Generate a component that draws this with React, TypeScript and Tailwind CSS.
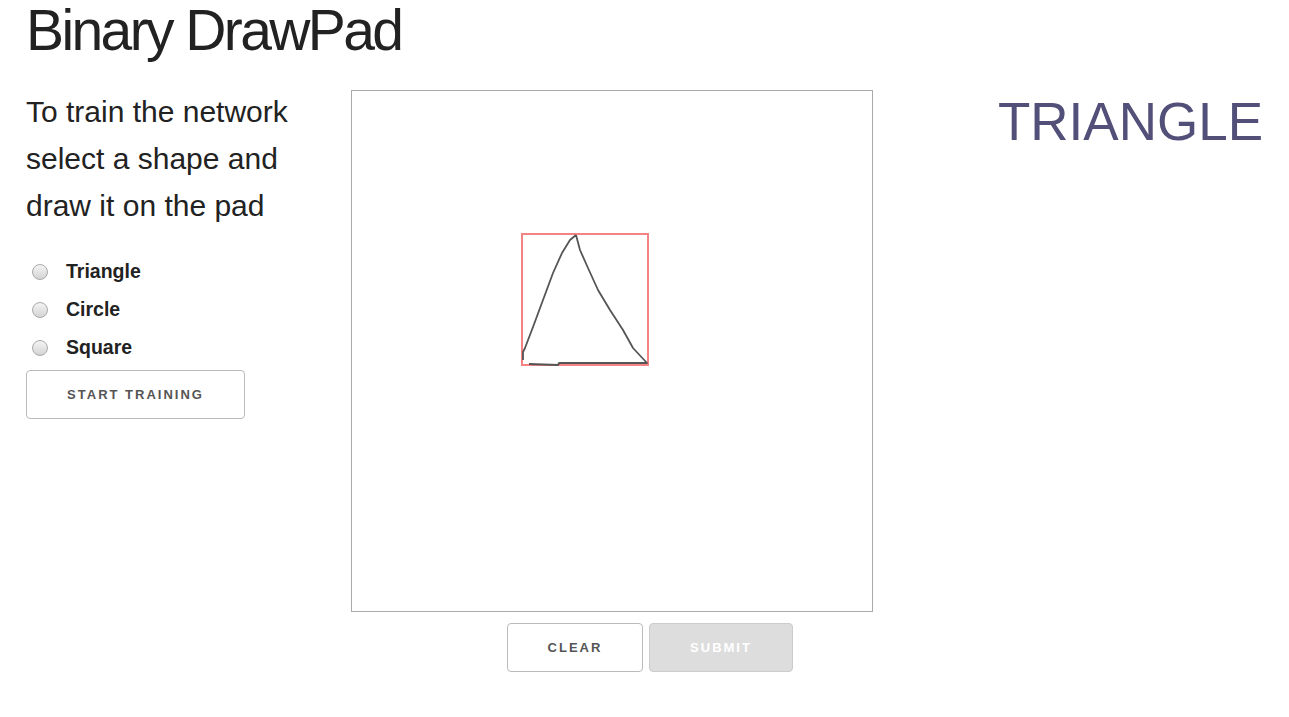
const shapes = ['Triangle', 'Circle', 'Square']

const btn =
	'h-[49px] rounded-[4px] border border-[#bbb] text-[13px] font-bold uppercase tracking-[2px] font-["Liberation_Sans",sans-serif]'

const DrawPad = () => (
	<div className="h-[522px] w-[522px] shrink-0 border border-[#aaa] bg-white">
		<svg
			className="block"
			height="520"
			viewBox="352 91 520 520"
			width="520"
		>
			<rect
				fill="none"
				height="131"
				opacity="0.9"
				stroke="#f47575"
				strokeWidth="2"
				width="126"
				x="522"
				y="234"
			/>
			<path
				d="M576 235 L570 240 L562 253 L553 273 L543 300 L533 327 L525 348 L523 352 L523 360 M529 364 L558 365 L559 363 L647 363 L633 348 L623 330 L610 310 L598 290 L588 268 L580 250 L576 235"
				fill="none"
				stroke="#555"
				strokeLinejoin="round"
				strokeWidth="1.8"
			/>
		</svg>
	</div>
)

export default function App() {
	return (
		<div className="min-h-screen bg-white px-[26px] pt-[2px] font-['Liberation_Sans',sans-serif] text-[#222]">
			<h1 className="-mt-[5px] text-[57px] leading-[66px] tracking-[-2.6px]">Binary DrawPad</h1>

			<div className="mt-[27px] flex">
				<div className="w-[325px] shrink-0">
					<p className="-mt-[2px] text-[30px] leading-[47px]">
						To train the network
						<br />
						select a shape and
						<br />
						draw it on the pad
					</p>
					<div className="mt-[30px] flex flex-col gap-[13px]">
						{shapes.map((s) => (
							<label
								className="flex h-[25px] items-center gap-[18px] pl-[6px] text-[19.5px] font-bold"
								key={s}
							>
								<span className="h-[16px] w-[16px] rounded-full border border-[#aaa] bg-gradient-to-b from-[#f4f4f4] to-[#d4d4d4]" />
								{s}
							</label>
						))}
					</div>
					<button className={`mt-[10px] w-[219px] bg-white text-[#555] ${btn}`}>Start Training</button>
				</div>

				<div className="flex flex-col">
					<DrawPad />
					<div className="mt-[11px] ml-[156px] flex gap-[6px]">
						<button className={`w-[136px] bg-white text-[#555] ${btn}`}>Clear</button>
						<button className={`w-[144px] border-[#ccc] bg-[#ddd] text-white ${btn}`}>Submit</button>
					</div>
				</div>

				<div className="flex-1 text-right">
					<p className="mt-[2px] text-[53px] leading-[60px] text-[#524f78]">TRIANGLE</p>
				</div>
			</div>
		</div>
	)
}
